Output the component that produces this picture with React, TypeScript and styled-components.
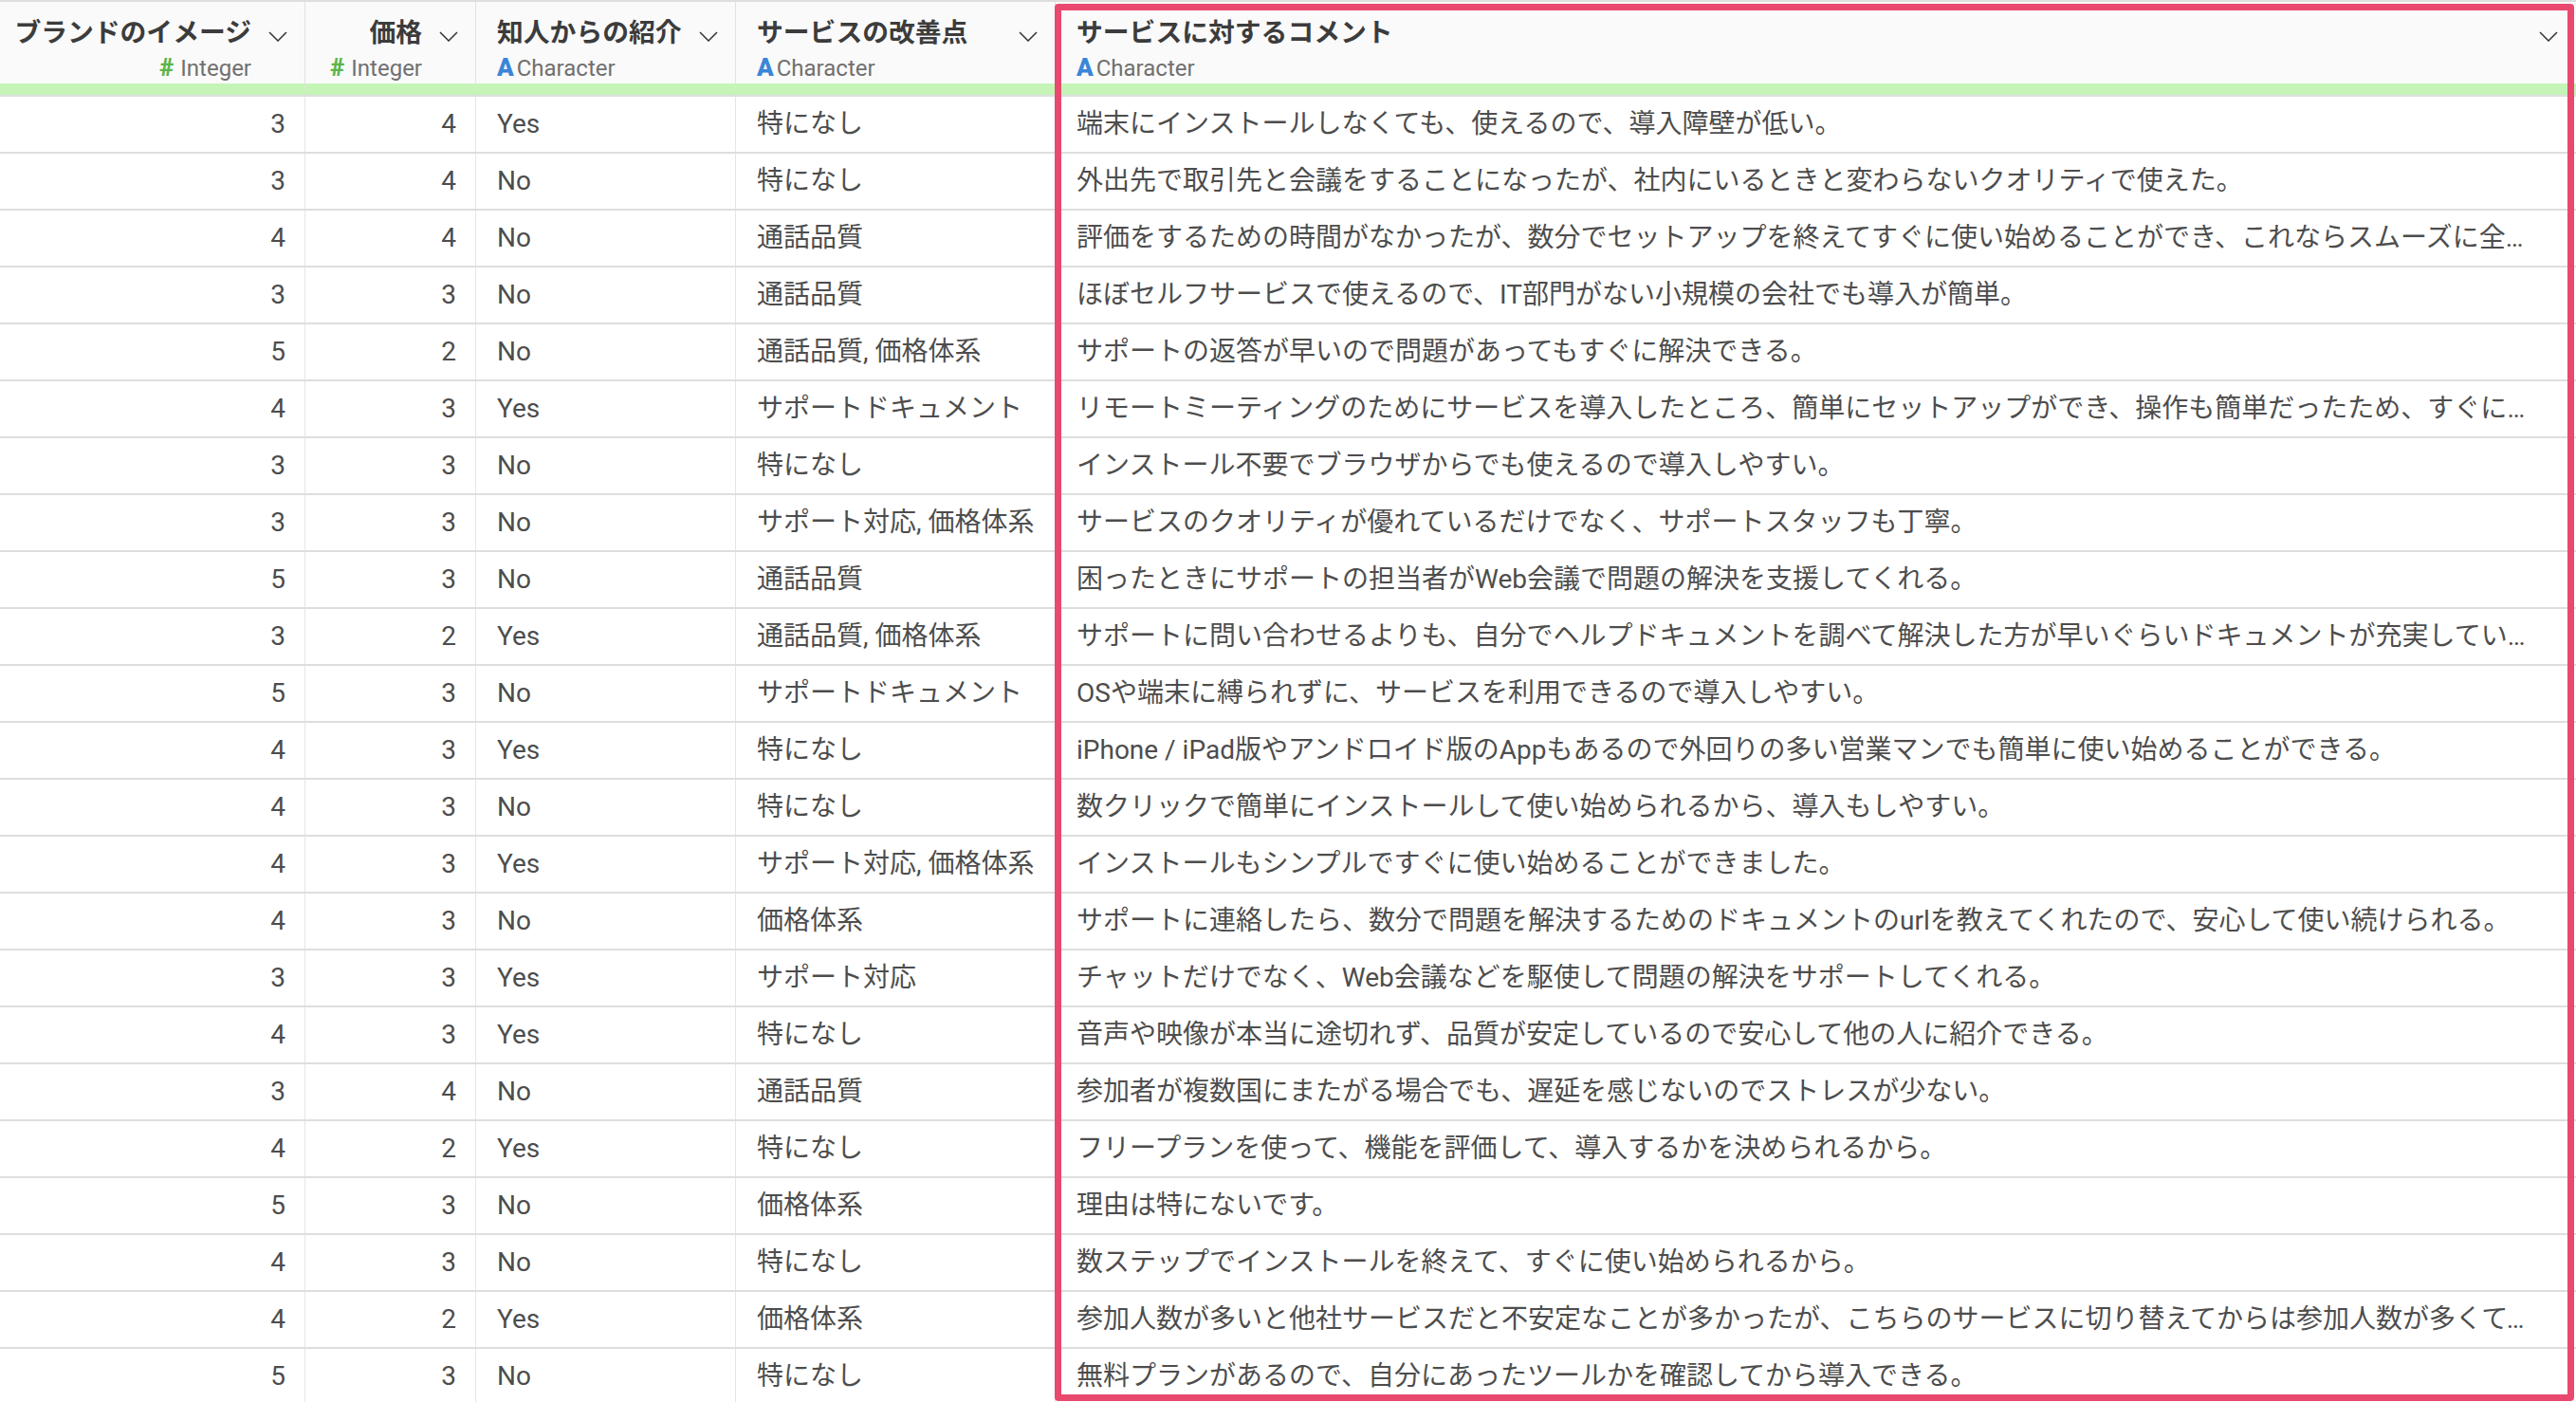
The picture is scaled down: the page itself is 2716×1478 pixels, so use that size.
import React from "react";
import styled, { createGlobalStyle } from "styled-components";

const GlobalStyle = createGlobalStyle`
  html, body {
    margin: 0;
    padding: 0;
    background: #ffffff;
  }
  body {
    font-family: Roboto, "Noto Sans CJK JP", sans-serif;
  }
`;

type Align = "left" | "right";

interface Column {
  key: string;
  title: string;
  type: "Integer" | "Character";
  align: Align;
}

const columns: Column[] = [
  { key: "brand", title: "ブランドのイメージ", type: "Integer", align: "right" },
  { key: "price", title: "価格", type: "Integer", align: "right" },
  { key: "referral", title: "知人からの紹介", type: "Character", align: "left" },
  { key: "improve", title: "サービスの改善点", type: "Character", align: "left" },
  { key: "comment", title: "サービスに対するコメント", type: "Character", align: "left" },
];

type Row = [number, number, string, string, string];

const rows: Row[] = [
  [3, 4, "Yes", "特になし", "端末にインストールしなくても、使えるので、導入障壁が低い。"],
  [3, 4, "No", "特になし", "外出先で取引先と会議をすることになったが、社内にいるときと変わらないクオリティで使えた。"],
  [4, 4, "No", "通話品質", "評価をするための時間がなかったが、数分でセットアップを終えてすぐに使い始めることができ、これならスムーズに全社へ展開できると感じた。"],
  [3, 3, "No", "通話品質", "ほぼセルフサービスで使えるので、IT部門がない小規模の会社でも導入が簡単。"],
  [5, 2, "No", "通話品質, 価格体系", "サポートの返答が早いので問題があってもすぐに解決できる。"],
  [4, 3, "Yes", "サポートドキュメント", "リモートミーティングのためにサービスを導入したところ、簡単にセットアップができ、操作も簡単だったため、すぐに社内で使い始めることができた。"],
  [3, 3, "No", "特になし", "インストール不要でブラウザからでも使えるので導入しやすい。"],
  [3, 3, "No", "サポート対応, 価格体系", "サービスのクオリティが優れているだけでなく、サポートスタッフも丁寧。"],
  [5, 3, "No", "通話品質", "困ったときにサポートの担当者がWeb会議で問題の解決を支援してくれる。"],
  [3, 2, "Yes", "通話品質, 価格体系", "サポートに問い合わせるよりも、自分でヘルプドキュメントを調べて解決した方が早いぐらいドキュメントが充実している。"],
  [5, 3, "No", "サポートドキュメント", "OSや端末に縛られずに、サービスを利用できるので導入しやすい。"],
  [4, 3, "Yes", "特になし", "iPhone / iPad版やアンドロイド版のAppもあるので外回りの多い営業マンでも簡単に使い始めることができる。"],
  [4, 3, "No", "特になし", "数クリックで簡単にインストールして使い始められるから、導入もしやすい。"],
  [4, 3, "Yes", "サポート対応, 価格体系", "インストールもシンプルですぐに使い始めることができました。"],
  [4, 3, "No", "価格体系", "サポートに連絡したら、数分で問題を解決するためのドキュメントのurlを教えてくれたので、安心して使い続けられる。"],
  [3, 3, "Yes", "サポート対応", "チャットだけでなく、Web会議などを駆使して問題の解決をサポートしてくれる。"],
  [4, 3, "Yes", "特になし", "音声や映像が本当に途切れず、品質が安定しているので安心して他の人に紹介できる。"],
  [3, 4, "No", "通話品質", "参加者が複数国にまたがる場合でも、遅延を感じないのでストレスが少ない。"],
  [4, 2, "Yes", "特になし", "フリープランを使って、機能を評価して、導入するかを決められるから。"],
  [5, 3, "No", "価格体系", "理由は特にないです。"],
  [4, 3, "No", "特になし", "数ステップでインストールを終えて、すぐに使い始められるから。"],
  [4, 2, "Yes", "価格体系", "参加人数が多いと他社サービスだと不安定なことが多かったが、こちらのサービスに切り替えてからは参加人数が多くても安定している。"],
  [5, 3, "No", "特になし", "無料プランがあるので、自分にあったツールかを確認してから導入できる。"],
];

const GRID = "322px 180px 274px 337px 1fr";

const Page = styled.div`
  position: relative;
  width: 100%;
  height: 100vh;
  overflow: hidden;
  background: #ffffff;
  font-family: Roboto, "Noto Sans CJK JP", sans-serif;
`;

const Table = styled.div`
  display: flex;
  flex-direction: column;
  width: 100%;
`;

const HeaderRow = styled.div`
  display: grid;
  grid-template-columns: ${GRID};
  border-top: 2px solid #dedede;
  background: #fafafa;
`;

const HeaderCell = styled.div<{ $align: Align; $last?: boolean }>`
  box-sizing: border-box;
  height: 98px;
  display: flex;
  align-items: flex-start;
  justify-content: ${(p) => (p.$align === "right" ? "flex-end" : "space-between")};
  padding: 16px ${(p) => (p.$last ? "19px" : "18px")} 0 ${(p) => (p.$align === "right" ? "12px" : "22px")};
  border-right: ${(p) => (p.$last ? "none" : "1px solid #e2e2e2")};
  border-bottom: 12px solid #c5f4b7;
  min-width: 0;
`;

const TitleBlock = styled.div<{ $align: Align }>`
  display: flex;
  flex-direction: column;
  align-items: ${(p) => (p.$align === "right" ? "flex-end" : "flex-start")};
  min-width: 0;
`;

const Title = styled.div`
  font-family: Roboto, "Noto Sans CJK JP", sans-serif;
  font-size: 27.8px;
  font-weight: 700;
  line-height: 34px;
  color: #3c3c3c;
  white-space: nowrap;
`;

const TypeLabel = styled.div`
  display: flex;
  align-items: baseline;
  margin-top: 6px;
  height: 26px;
  line-height: 26px;
  font-family: Roboto, sans-serif;
  font-size: 24px;
  color: #707070;
  white-space: nowrap;
`;

const TypeIcon = styled.span<{ $kind: "Integer" | "Character" }>`
  font-family: Roboto, sans-serif;
  font-weight: 900;
  font-size: 26px;
  color: ${(p) => (p.$kind === "Integer" ? "#5db54a" : "#3a86d8")};
  margin-right: ${(p) => (p.$kind === "Integer" ? "7px" : "3px")};
`;

const ChevronWrap = styled.span<{ $align: Align }>`
  display: flex;
  flex-shrink: 0;
  margin-top: 15px;
  margin-left: ${(p) => (p.$align === "right" ? "18px" : "12px")};
`;

const BodyRow = styled.div`
  display: grid;
  grid-template-columns: ${GRID};
  border-top: 2px solid #dedede;
  height: 60px;
  box-sizing: border-box;
`;

const Cell = styled.div<{ $align: Align; $last?: boolean }>`
  box-sizing: border-box;
  height: 58px;
  line-height: 58px;
  padding: 0 ${(p) => (p.$last ? "40px" : p.$align === "right" ? "20px" : "12px")} 0 22px;
  text-align: ${(p) => p.$align};
  font-family: Roboto, "Noto Sans CJK JP", sans-serif;
  font-size: 28px;
  color: #4d4d4d;
  white-space: nowrap;
  overflow: hidden;
  text-overflow: ellipsis;
  border-right: ${(p) => (p.$last ? "none" : "1px solid #e6e6e6")};
  min-width: 0;
`;

const Highlight = styled.div`
  position: absolute;
  top: 4px;
  left: 1112px;
  right: 2px;
  bottom: 1px;
  border: 7px solid #e9486f;
  border-radius: 4px;
  pointer-events: none;
`;

const Chevron: React.FC = () => (
  <svg width="20" height="11" viewBox="0 0 20 11" fill="none">
    <path d="M1 1 L10 10 L19 1" stroke="#333" strokeWidth="1.5" strokeLinejoin="miter" />
  </svg>
);

const HeaderColumn: React.FC<{ col: Column; last: boolean }> = ({ col, last }) => (
  <HeaderCell $align={col.align} $last={last}>
    <TitleBlock $align={col.align}>
      <Title>{col.title}</Title>
      <TypeLabel>
        <TypeIcon $kind={col.type}>{col.type === "Integer" ? "#" : "A"}</TypeIcon>
        {col.type}
      </TypeLabel>
    </TitleBlock>
    <ChevronWrap $align={col.align}>
      <Chevron />
    </ChevronWrap>
  </HeaderCell>
);

export default function App() {
  return (
    <Page>
      <GlobalStyle />
      <Table>
        <HeaderRow>
          {columns.map((c, i) => (
            <HeaderColumn key={c.key} col={c} last={i === columns.length - 1} />
          ))}
        </HeaderRow>
        {rows.map((r, ri) => (
          <BodyRow key={ri}>
            {r.map((v, ci) => (
              <Cell key={ci} $align={columns[ci].align} $last={ci === columns.length - 1}>
                {v}
              </Cell>
            ))}
          </BodyRow>
        ))}
      </Table>
      <Highlight />
    </Page>
  );
}
